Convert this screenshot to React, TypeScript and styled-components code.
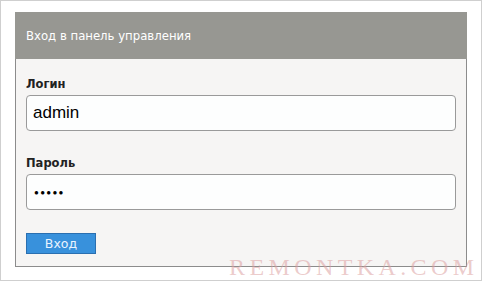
import React from "react";
import styled, { createGlobalStyle } from "styled-components";

const Global = createGlobalStyle`
  html, body { margin: 0; padding: 0; background: #ffffff; }
  body { font-family: "DejaVu Sans", "Liberation Sans", sans-serif; }
`;

const Frame = styled.div`
  position: relative;
  box-sizing: border-box;
  width: 482px;
  height: 281px;
  border: 1px solid #cfcfcf;
  padding: 11px 14px 0 14px;
  background: #ffffff;
  overflow: hidden;
`;

const Panel = styled.div`
  box-sizing: border-box;
  width: 452px;
  height: 255px;
  border: 1px solid #8c8c8c;
  border-top: none;
  background: #f6f5f4;
  display: flex;
  flex-direction: column;
`;

const Header = styled.div`
  box-sizing: border-box;
  height: 47px;
  margin: 0 -1px;
  background: #979792;
  color: #ffffff;
  font-family: "DejaVu Sans", sans-serif;
  font-size: 11.7px;
  display: flex;
  align-items: center;
  padding-left: 11px;
  padding-top: 1px;
`;

const Body = styled.div`
  display: flex;
  flex-direction: column;
  padding: 18px 10px 0 10px;
`;

const Field = styled.div<{ $last?: boolean }>`
  display: flex;
  flex-direction: column;
  gap: 4px;
  margin-bottom: ${(p) => (p.$last ? "23px" : "25px")};
`;

const Label = styled.label`
  font-family: "DejaVu Sans", sans-serif;
  font-weight: bold;
  font-size: 11.5px;
  line-height: 14px;
  color: #222222;
`;

const Input = styled.div`
  box-sizing: border-box;
  height: 36px;
  width: 430px;
  border: 1px solid #9a9a9a;
  border-radius: 4px;
  background: #fdfefe;
  display: flex;
  align-items: center;
  padding-left: 6px;
  font-family: "Liberation Sans", Arial, sans-serif;
  font-size: 17px;
  color: #000000;
`;

const Dots = styled.span`
  font-family: "Liberation Sans", Arial, sans-serif;
  font-size: 8px;
  letter-spacing: 1.3px;
  color: #000;
  padding-top: 1px;
  padding-left: 1px;
`;

const Button = styled.button`
  box-sizing: border-box;
  width: 70px;
  height: 21px;
  padding: 0;
  border: 1px solid #2a6fb0;
  background: #3891dc;
  color: #eaf4ff;
  font-family: "DejaVu Sans", sans-serif;
  font-size: 12.5px;
  cursor: pointer;
`;

const Watermark = styled.div`
  position: absolute;
  left: 228px;
  top: 253px;
  white-space: nowrap;
  font-family: "Liberation Serif", serif;
  font-size: 24px;
  letter-spacing: 4.4px;
  color: rgba(220, 160, 160, 0.55);
  pointer-events: none;
`;

export default function App() {
  return (
    <>
      <Global />
      <Frame>
        <Panel>
          <Header>Вход в панель управления</Header>
          <Body>
            <Field>
              <Label>Логин</Label>
              <Input>admin</Input>
            </Field>
            <Field $last>
              <Label>Пароль</Label>
              <Input>
                <Dots>●●●●●</Dots>
              </Input>
            </Field>
            <Button>Вход</Button>
          </Body>
        </Panel>
        <Watermark>REMONTKA.COM</Watermark>
      </Frame>
    </>
  );
}
